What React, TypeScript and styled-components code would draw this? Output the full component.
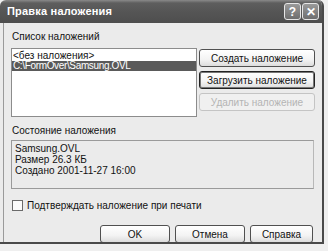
import React from "react";
import styled, { createGlobalStyle } from "styled-components";

const Global = createGlobalStyle`
  html, body { margin: 0; padding: 0; background: #efefef; }
  body { font-family: "Liberation Sans", Arial, sans-serif; font-size: 10px; color: #111; }
`;

const Window = styled.div`
  width: 322px;
  height: 242px;
  background: #ebebeb;
  border-right: 2px solid #4a4a4a;
  border-bottom: 2px solid #4a4a4a;
  border-top-left-radius: 6px;
  border-top-right-radius: 6px;
  display: flex;
  flex-direction: column;
  overflow: hidden;
`;

const TitleBar = styled.div`
  height: 23px;
  flex: none;
  background: linear-gradient(#8a8a8a 0px, #5e5e5e 3px, #555 12px, #4e4e4e 23px);
  display: flex;
  align-items: center;
  padding: 0 3px 0 7px;
`;

const Title = styled.div`
  flex: 1;
  color: #fff;
  font-weight: bold;
  font-size: 11px;
  letter-spacing: 0.2px;
  padding-bottom: 1px;
`;

const TitleButton = styled.div`
  width: 15px;
  height: 15px;
  border: 1px solid #e6e6e6;
  border-radius: 3px;
  background: linear-gradient(#9a9a9a, #6e6e6e);
  color: #fff;
  display: flex;
  align-items: center;
  justify-content: center;
  margin-left: 1px;
  font-weight: bold;
  font-size: 12px;
`;

const Body = styled.div`
  flex: 1;
  margin-left: 3px;
  border-left: 1px solid #9a9a9a;
  padding: 7px 7px 0 7px;
  display: flex;
  flex-direction: column;
`;

const Label = styled.div<{ $gap?: number }>`
  line-height: 13px;
  height: 13px;
  padding-left: 1px;
  margin-top: ${(p) => p.$gap ?? 0}px;
`;

const TopRow = styled.div`
  display: flex;
  margin-top: 5px;
  gap: 2px;
`;

const ListBox = styled.div`
  width: 185px;
  height: 65px;
  background: #fff;
  border: 1px solid #8c8c8c;
  padding-top: 2px;
  box-sizing: content-box;
`;

const ListItem = styled.div<{ $selected?: boolean }>`
  height: 10px;
  line-height: 10px;
  padding-left: 1px;
  background: ${(p) => (p.$selected ? "#5a5a5a" : "transparent")};
  color: ${(p) => (p.$selected ? "#fff" : "#111")};
  white-space: nowrap;
  letter-spacing: ${(p) => (p.$selected ? "-0.35px" : "0")};
`;

const ButtonColumn = styled.div`
  display: flex;
  flex-direction: column;
  gap: 4px;
  padding-top: 1px;
`;

const Button = styled.div<{ $width: number; $focused?: boolean; $disabled?: boolean }>`
  width: ${(p) => p.$width}px;
  height: 18px;
  box-sizing: border-box;
  border: 1px solid ${(p) => (p.$disabled ? "#c4c4c4" : p.$focused ? "#222" : "#505050")};
  box-shadow: ${(p) => (p.$focused ? "inset 0 0 0 1px #777" : "none")};
  border-radius: 3px;
  background: ${(p) =>
    p.$disabled ? "#f0f0f0" : "linear-gradient(#ffffff, #f3f3f3 60%, #dcdcdc)"};
  color: ${(p) => (p.$disabled ? "#b4b4b4" : "#111")};
  display: flex;
  align-items: center;
  justify-content: center;
  white-space: nowrap;
`;

const StatusBox = styled.div`
  margin-top: 3px;
  height: 45px;
  border: 1px solid #9a9a9a;
  border-right-color: #b8b8b8;
  padding: 2px 0 0 3px;
  line-height: 11px;
  display: flex;
  flex-direction: column;
  margin-right: 1px;
`;

const CheckRow = styled.label`
  display: flex;
  align-items: center;
  gap: 4px;
  margin-top: 11px;
  padding-left: 1px;
  height: 11px;
`;

const CheckBox = styled.span`
  width: 9px;
  height: 9px;
  border: 1px solid #6a6a6a;
  background: #fafafa;
`;

const Footer = styled.div`
  display: flex;
  justify-content: flex-end;
  gap: 5px;
  margin-top: 14px;
  padding-right: 2px;
`;

export default function App() {
  return (
    <>
      <Global />
      <Window>
        <TitleBar>
          <Title>Правка наложения</Title>
          <TitleButton>?</TitleButton>
          <TitleButton>✕</TitleButton>
        </TitleBar>
        <Body>
          <Label>Список наложений</Label>
          <TopRow>
            <ListBox>
              <ListItem>&lt;без наложения&gt;</ListItem>
              <ListItem $selected>C:\FormOver\Samsung.OVL</ListItem>
            </ListBox>
            <ButtonColumn>
              <Button $width={116}>Создать наложение</Button>
              <Button $width={116} $focused>Загрузить наложение</Button>
              <Button $width={116} $disabled>Удалить наложение</Button>
            </ButtonColumn>
          </TopRow>
          <Label $gap={7}>Состояние наложения</Label>
          <StatusBox>
            <span>Samsung.OVL</span>
            <span>Размер 26.3 КБ</span>
            <span>Создано 2001-11-27 16:00</span>
          </StatusBox>
          <CheckRow>
            <CheckBox />
            <span>Подтверждать наложение при печати</span>
          </CheckRow>
          <Footer>
            <Button $width={70}>OK</Button>
            <Button $width={70}>Отмена</Button>
            <Button $width={63}>Справка</Button>
          </Footer>
        </Body>
      </Window>
    </>
  );
}
